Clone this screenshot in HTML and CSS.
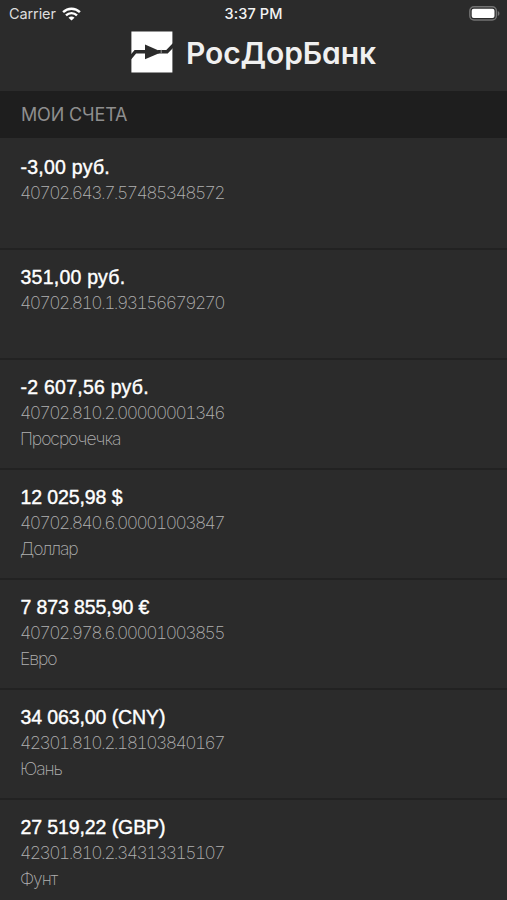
FILE: index.html
```html
<!DOCTYPE html>
<html lang="ru">
<head>
<meta charset="utf-8">
<title>РосДорБанк</title>
<link rel="stylesheet" href="styles.css">
</head>
<body>
<header class="header">
  <div class="status">
    <div class="carrier"><span>Carrier</span>
      <svg class="wifi" width="19" height="14" viewBox="0 0 19 14" fill="none" stroke="#fff" stroke-width="2.4"><path d="M1.1 5.2C5.8.6 13.2.6 17.9 5.2"/><path d="M4 8.4c3.1-3 7.9-3 11 0"/><path d="M6.5 10.7c1.7-1.6 4.3-1.6 6 0L9.5 13.6z" fill="#fff" stroke="none"/></svg>
    </div>
    <span class="time">3:37 PM</span>
    <svg class="battery" width="31" height="15" viewBox="0 0 31 15"><rect x=".8" y=".8" width="26.6" height="13.2" rx="4.2" fill="none" stroke="#737373" stroke-width="1.4"/><rect x="2.7" y="2.7" width="22.8" height="9.4" rx="2" fill="#fff"/><path d="M28.8 5v5c2.2-.8 2.2-4.2 0-5z" fill="#737373"/></svg>
  </div>
  <div class="brand">
    <svg class="logo" width="42" height="42" viewBox="0 0 42 42"><path fill="#fff" d="M.4.4h41v41H.4z"/><path d="M-1 27.2 4.4 20.7H15M27 20.7H36L43 13.5" fill="none" stroke="#2b2b2b" stroke-width="3.4"/><path d="M14 13.6 31 20.9 14 28.2z" fill="#2b2b2b"/><path d="M30.2 18.8v4" stroke="#999" stroke-width="1"/></svg>
    <span class="brand-name">РосДорБанк</span>
  </div>
</header>
<h1 class="section">МОИ СЧЕТА</h1>
<main class="accounts">
  <section class="account"><div class="amount rub">-3,00 руб.</div><div class="number">40702.643.7.57485348572</div></section>
  <section class="account"><div class="amount rub">351,00 руб.</div><div class="number">40702.810.1.93156679270</div></section>
  <section class="account"><div class="amount rub">-2 607,56 руб.</div><div class="number">40702.810.2.00000001346</div><div class="label">Просрочечка</div></section>
  <section class="account"><div class="amount">12 025,98 $</div><div class="number">40702.840.6.00001003847</div><div class="label">Доллар</div></section>
  <section class="account"><div class="amount">7 873 855,90 €</div><div class="number">40702.978.6.00001003855</div><div class="label">Евро</div></section>
  <section class="account"><div class="amount">34 063,00 (CNY)</div><div class="number">42301.810.2.18103840167</div><div class="label">Юань</div></section>
  <section class="account"><div class="amount">27 519,22 (GBP)</div><div class="number">42301.810.2.34313315107</div><div class="label">Фунт</div></section>
</main>
</body>
</html>
```
FILE: styles.css
```css
* { box-sizing: border-box; }
body { margin: 0; height: 900px; overflow: hidden; background: #2b2b2b; color: #fff; font-family: "Liberation Sans", sans-serif; }
.header { height: 91px; }
.status { display: grid; grid-template-columns: 1fr auto 1fr; align-items: center; height: 27px; padding: 0 7px 0 9px; font: 14.5px/27px Inter, sans-serif; }
.carrier { display: flex; align-items: center; gap: 6px; color: #ddd; letter-spacing: -.1px; }
.time { position: relative; left: -1px; font-weight: 500; letter-spacing: .1px; color: #f3f3f3; }
.battery { justify-self: end; }
.brand { display: flex; align-items: center; gap: 13px; height: 50px; padding-left: 131px; }
.brand-name { padding-top: 2px; font: 600 30px/50px Inter, sans-serif; font-feature-settings: "cv11", "ss03"; color: #f0f0f0; letter-spacing: -.1px; }
.section { margin: 0; height: 47px; padding-left: 21px; background: #1e1e1e; color: #8e8e8e; font: 400 18px/48px Inter, sans-serif; letter-spacing: -.15px; }
.accounts { display: grid; grid-auto-rows: 110px; }
.account { padding: 14px 20px 0; border-top: 2px solid #222; }
.account:first-child { border-top-color: transparent; }
.amount { padding-left: .5px; font-size: 19.5px; line-height: 26px; letter-spacing: -.1px; -webkit-text-stroke: .4px #fff; }
.rub { letter-spacing: .24px; }
.number, .label { font: 200 17.5px/26px Inter, sans-serif; color: #b0b0b0; }
.number { font-variant-numeric: tabular-nums; letter-spacing: -1.57px; }
.label { letter-spacing: -1.05px; }
```
